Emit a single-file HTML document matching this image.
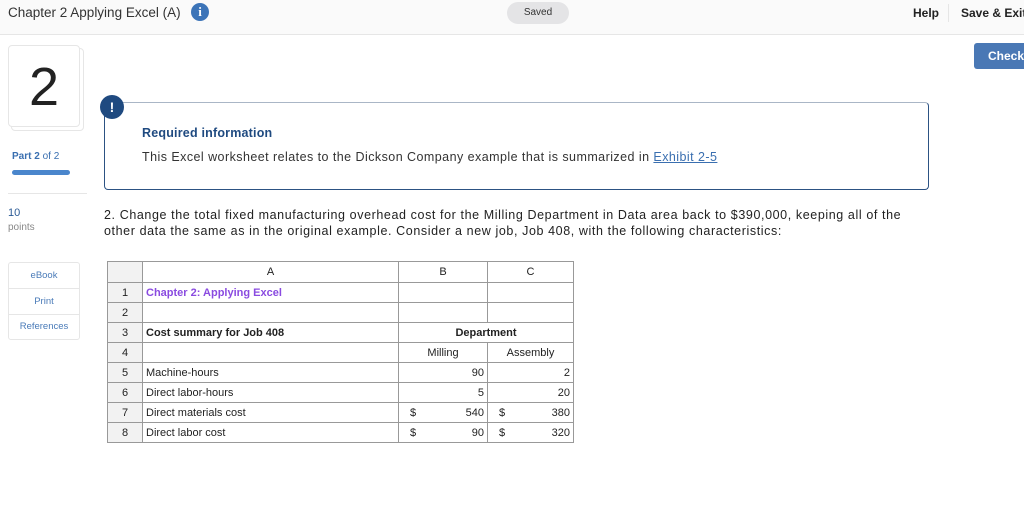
<!DOCTYPE html>
<html><head><meta charset="utf-8"><style>
*{margin:0;padding:0;box-sizing:border-box}
body{width:1024px;height:526px;background:#fff;font-family:"Liberation Sans",sans-serif;color:#222;position:relative;overflow:hidden}
.abs{position:absolute;white-space:nowrap}
.top{left:0;top:0;width:1024px;height:35px;background:#fafafa;border-bottom:1px solid #e6e6e6}
table{border-collapse:collapse;position:absolute;left:107px;top:261px;font-size:11px}
td{border:1px solid #999;height:20px;padding:0 3px;white-space:nowrap}
.n{text-align:center;background:#f2f2f2;width:35px}
.c{text-align:center}
.r{text-align:right}
</style></head><body>
<div class="abs top"></div>
<div class="abs" style="left:8px;top:5px;font-size:13.5px;color:#333">Chapter 2 Applying Excel (A)</div>
<div class="abs" style="left:191px;top:3px;width:18px;height:18px;border-radius:50%;background:#3c74b8;color:#fff;font:bold 13px 'Liberation Serif',serif;text-align:center;line-height:18px">i</div>
<div class="abs" style="left:507px;top:2px;width:62px;height:22px;border-radius:11px;background:#e4e4e6;font-size:10px;text-align:center;line-height:22px;color:#333">Saved</div>
<div class="abs" style="left:913px;top:6px;font-size:12px;font-weight:bold;color:#222">Help</div>
<div class="abs" style="left:948px;top:4px;width:1px;height:18px;background:#e6e6e6"></div>
<div class="abs" style="left:961px;top:6px;font-size:12px;font-weight:bold;color:#222">Save &amp; Exit</div>
<div class="abs" style="left:974px;top:43px;width:56px;height:26px;border-radius:3px;background:#4a78b5;color:#fff;font-size:12px;font-weight:bold;line-height:26px;padding-left:14px">Check</div>

<div class="abs" style="left:11px;top:48px;width:73px;height:83px;border:1px solid #e6e6e6;border-radius:4px"></div>
<div class="abs" style="left:8px;top:45px;width:72px;height:82px;border:1px solid #e6e6e6;border-radius:4px;background:#fff;font-size:54px;text-align:center;line-height:82px;color:#222">2</div>
<div class="abs" style="left:12px;top:151px;font-size:10px;color:#3a6fb0"><b>Part 2</b> of 2</div>
<div class="abs" style="left:12px;top:170px;width:58px;height:5px;border-radius:3px;background:#4a86cc"></div>
<div class="abs" style="left:8px;top:193px;width:79px;height:1px;background:#e6e6e6"></div>
<div class="abs" style="left:8px;top:207px;font-size:11px;color:#2a5a95">10</div>
<div class="abs" style="left:8px;top:222px;font-size:10px;color:#888">points</div>
<div class="abs" style="left:8px;top:262px;width:72px;height:78px;border:1px solid #e6e6e6;border-radius:3px;font-size:9.5px;color:#4a7bb8;text-align:center">
<div style="height:26px;line-height:26px;border-bottom:1px solid #e6e6e6">eBook</div>
<div style="height:26px;line-height:26px;border-bottom:1px solid #e6e6e6">Print</div>
<div style="height:24px;line-height:24px">References</div></div>

<div class="abs" style="left:104px;top:102px;width:825px;height:88px;border:1px solid #2c5283;border-top-color:#aab6c6;border-radius:4px"></div>
<div class="abs" style="left:100px;top:95px;width:24px;height:24px;border-radius:50%;background:#1f4a80;color:#fff;font-weight:bold;font-size:14px;text-align:center;line-height:24px">!</div>
<div class="abs" style="left:142px;top:126px;font-size:12.5px;font-weight:bold;color:#1f4a80;letter-spacing:0.2px">Required information</div>
<div class="abs" style="left:142px;top:150px;font-size:12.5px;color:#333;letter-spacing:0.45px">This Excel worksheet relates to the Dickson Company example that is summarized in <span style="color:#3a6fb0;text-decoration:underline">Exhibit 2-5</span></div>

<div class="abs" style="left:104px;top:207px;font-size:12.5px;color:#222;line-height:16px;letter-spacing:0.6px;white-space:normal;width:810px">2. Change the total fixed manufacturing overhead cost for the Milling Department in Data area back to $390,000, keeping all of the other data the same as in the original example. Consider a new job, Job 408, with the following characteristics:</div>

<table>
<tr style="height:21px"><td class="n"></td><td class="c" style="width:256px">A</td><td class="c" style="width:89px">B</td><td class="c" style="width:86px">C</td></tr>
<tr><td class="n">1</td><td style="color:#8a4be0;font-weight:bold">Chapter 2: Applying Excel</td><td></td><td></td></tr>
<tr><td class="n">2</td><td></td><td></td><td></td></tr>
<tr><td class="n">3</td><td style="font-weight:bold">Cost summary for Job 408</td><td colspan="2" class="c" style="font-weight:bold">Department</td></tr>
<tr><td class="n">4</td><td></td><td class="c">Milling</td><td class="c">Assembly</td></tr>
<tr><td class="n">5</td><td>Machine-hours</td><td class="r">90</td><td class="r">2</td></tr>
<tr><td class="n">6</td><td>Direct labor-hours</td><td class="r">5</td><td class="r">20</td></tr>
<tr><td class="n">7</td><td>Direct materials cost</td><td class="r"><span style="float:left;padding-left:8px">$</span>540</td><td class="r"><span style="float:left;padding-left:8px">$</span>380</td></tr>
<tr><td class="n">8</td><td>Direct labor cost</td><td class="r"><span style="float:left;padding-left:8px">$</span>90</td><td class="r"><span style="float:left;padding-left:8px">$</span>320</td></tr>
</table>
</body></html>
